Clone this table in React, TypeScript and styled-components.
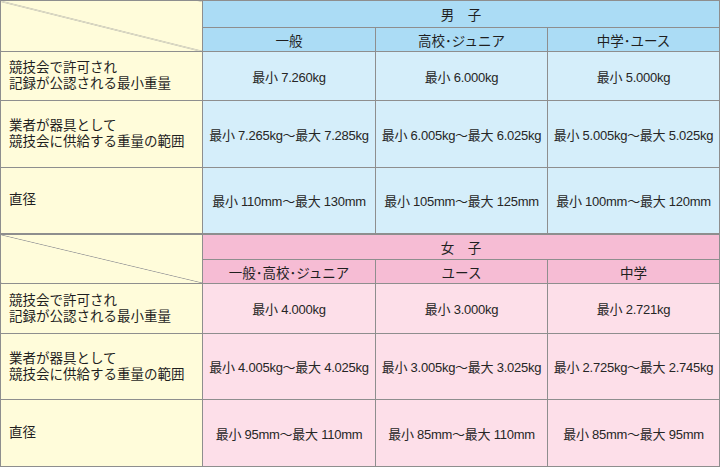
import * as React from "react";
import styled, { createGlobalStyle } from "styled-components";

const GlobalStyle = createGlobalStyle`
  html, body {
    margin: 0;
    padding: 0;
    background: #ffffff;
  }
  body {
    font-family: "Liberation Sans", "Noto Sans CJK JP", sans-serif;
    color: #262626;
  }
`;

type Tone = "men" | "women";

const palette = {
  men: { head: "#abdcf5", body: "#d5eefa" },
  women: { head: "#f6bcd4", body: "#fddfe9" },
};

const LINE = "#8e8e8e";

const Table = styled.table`
  border-collapse: collapse;
  table-layout: fixed;
  width: 719px;
  font-size: 13.5px;

  td,
  th {
    border: 1px solid ${LINE};
    padding: 0;
    font-weight: normal;
  }
`;

const Row = styled.tr<{ $h: number }>`
  height: ${p => p.$h}px;
`;

const SectionRow = styled(Row)`
  th,
  td {
    border-top: 2px solid ${LINE};
  }
`;

const Corner = styled.th`
  background-color: #fffcda;
  background-image: linear-gradient(
    to top right,
    transparent calc(50% - 0.7px),
    #9a9a9a 50%,
    transparent calc(50% + 0.7px)
  );
`;

const GroupHead = styled.th<{ $tone: Tone }>`
  background: ${p => palette[p.$tone].head};
  text-align: center;
  font-size: 13.5px;
  color: #1f1f1f;
`;

const SubHead = styled.th<{ $tone: Tone }>`
  background: ${p => palette[p.$tone].head};
  text-align: center;
  font-size: 13.5px;
  color: #1f1f1f;
`;

const Label = styled.td`
  background: #fffcda;
  text-align: left;
  padding-left: 8px !important;
  font-size: 13.5px;
  color: #1f1f1f;
`;

const LabelLine = styled.span`
  display: block;
  line-height: 16px;
`;

const Value = styled.td<{ $tone: Tone }>`
  background: ${p => palette[p.$tone].body};
  text-align: center;
  font-size: 13px;
  letter-spacing: -0.25px;
  white-space: nowrap;
`;

const labels = [
  ["競技会で許可され", "記録が公認される最小重量"],
  ["業者が器具として", "競技会に供給する重量の範囲"],
  ["直径"],
];

const sections: {
  tone: Tone;
  title: string;
  columns: string[];
  rows: string[][];
  heights: number[];
}[] = [
  {
    tone: "men",
    title: "男　子",
    columns: ["一般", "高校･ジュニア", "中学･ユース"],
    rows: [
      ["最小 7.260kg", "最小 6.000kg", "最小 5.000kg"],
      [
        "最小 7.265kg～最大 7.285kg",
        "最小 6.005kg～最大 6.025kg",
        "最小 5.005kg～最大 5.025kg",
      ],
      [
        "最小 110mm～最大 130mm",
        "最小 105mm～最大 125mm",
        "最小 100mm～最大 120mm",
      ],
    ],
    heights: [27, 24, 49, 67, 66],
  },
  {
    tone: "women",
    title: "女　子",
    columns: ["一般･高校･ジュニア", "ユース", "中学"],
    rows: [
      ["最小 4.000kg", "最小 3.000kg", "最小 2.721kg"],
      [
        "最小 4.005kg～最大 4.025kg",
        "最小 3.005kg～最大 3.025kg",
        "最小 2.725kg～最大 2.745kg",
      ],
      [
        "最小 95mm～最大 110mm",
        "最小 85mm～最大 110mm",
        "最小 85mm～最大 95mm",
      ],
    ],
    heights: [26, 24, 50, 66, 67],
  },
];

const Section = ({
  section,
  first,
}: {
  section: (typeof sections)[number];
  first: boolean;
}) => {
  const TitleRow = first ? Row : SectionRow;
  const { tone, heights } = section;
  return (
    <>
      <TitleRow $h={heights[0]}>
        <Corner rowSpan={2} />
        <GroupHead $tone={tone} colSpan={3}>
          {section.title}
        </GroupHead>
      </TitleRow>
      <Row $h={heights[1]}>
        {section.columns.map(c => (
          <SubHead key={c} $tone={tone}>
            {c}
          </SubHead>
        ))}
      </Row>
      {section.rows.map((values, i) => (
        <Row key={i} $h={heights[i + 2]}>
          <Label>
            {labels[i].map((line, j) => (
              <LabelLine key={j}>{line}</LabelLine>
            ))}
          </Label>
          {values.map((v, k) => (
            <Value key={k} $tone={tone}>
              {v}
            </Value>
          ))}
        </Row>
      ))}
    </>
  );
};

export default function App() {
  return (
    <>
      <GlobalStyle />
      <Table>
        <colgroup>
          <col style={{ width: 202 }} />
          <col style={{ width: 173 }} />
          <col style={{ width: 172 }} />
          <col style={{ width: 172 }} />
        </colgroup>
        <tbody>
          {sections.map((s, i) => (
            <Section key={s.tone} section={s} first={i === 0} />
          ))}
        </tbody>
      </Table>
    </>
  );
}
